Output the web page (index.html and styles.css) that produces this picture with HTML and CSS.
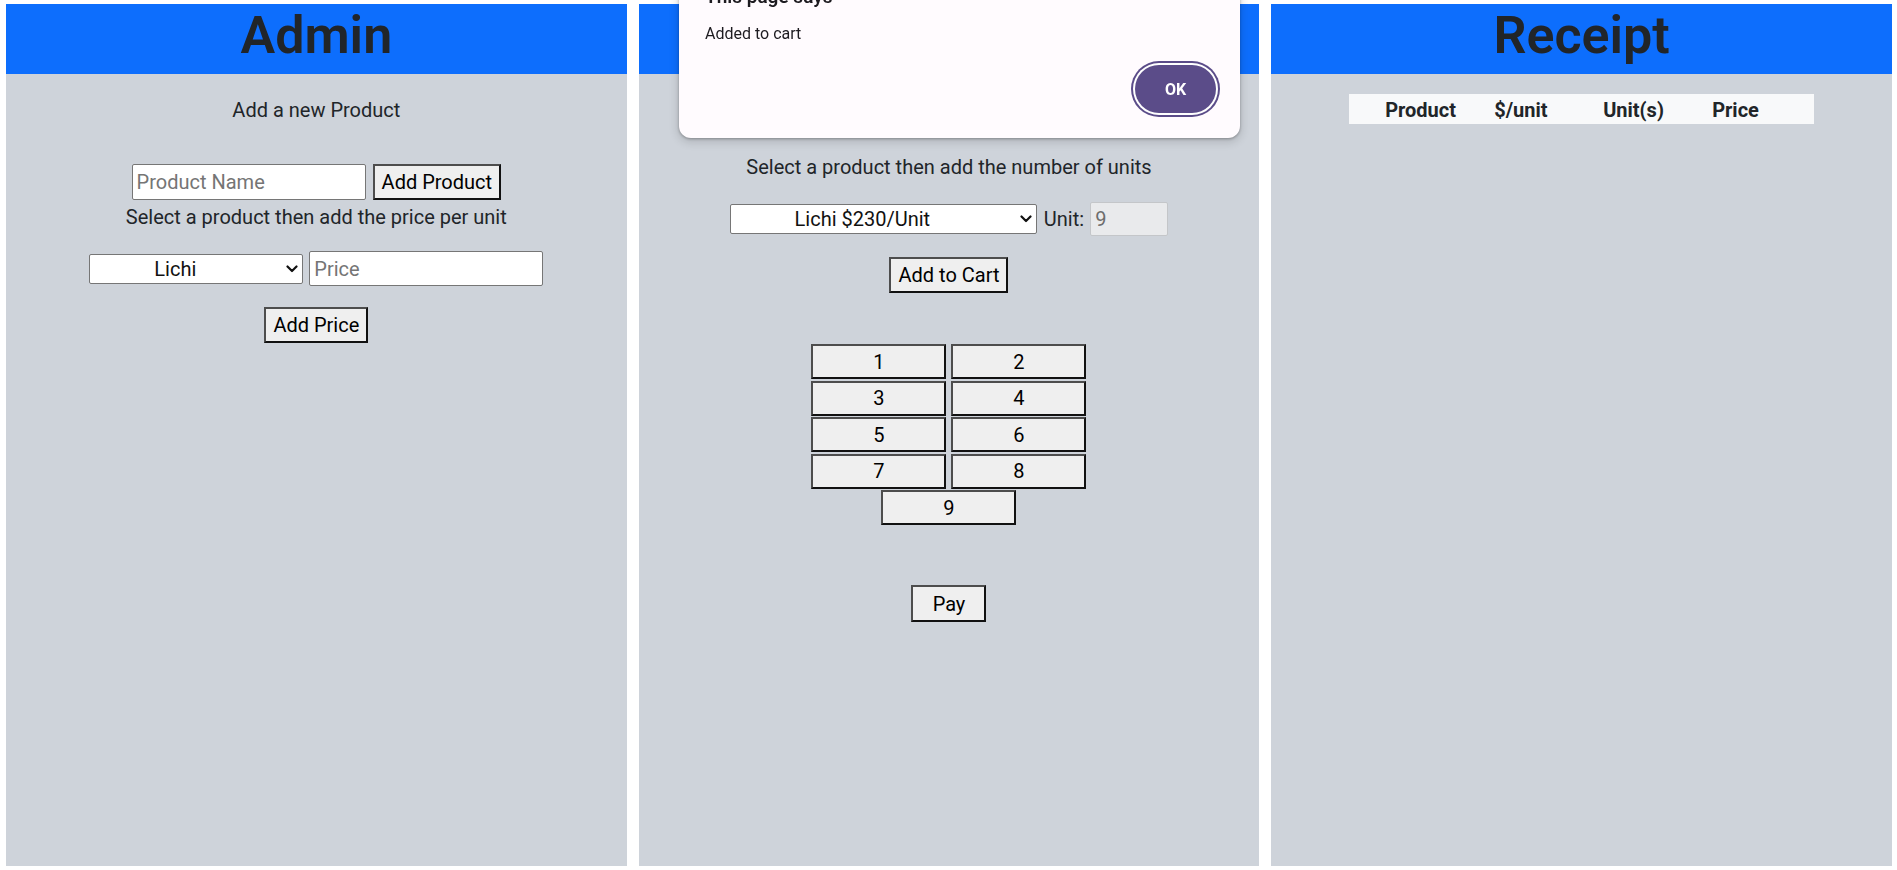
FILE: index.html
```html
<!DOCTYPE html>
<html lang="en">
<head>
<meta charset="utf-8">
<title>Shop POS</title>
<link rel="stylesheet" href="styles.css">
</head>
<body>
<main class="board">
  <section class="panel">
    <header class="panel-head"><h1 class="panel-title">Admin</h1></header>
    <div class="panel-body">
      <p class="text text-first">Add a new Product</p>
      <div class="field-row field-row-product">
        <input class="field field-name" type="text" placeholder="Product Name">
        <button class="btn" type="button">Add Product</button>
      </div>
      <p class="text text-tight">Select a product then add the price per unit</p>
      <div class="field-row field-row-price">
        <span class="picker-wrap">
          <select class="picker picker-admin"><option>Lichi</option></select>
          <svg class="chevron" width="12" height="8" viewBox="0 0 12 8" aria-hidden="true"><path d="M1.5 1.5 L6 6 L10.5 1.5" fill="none" stroke="#111" stroke-width="2.2" stroke-linecap="round" stroke-linejoin="round"/></svg>
        </span>
        <input class="field field-price" type="text" placeholder="Price">
      </div>
      <button class="btn btn-gap" type="button">Add Price</button>
    </div>
  </section>

  <section class="panel">
    <header class="panel-head"><h1 class="panel-title">Cashier</h1></header>
    <div class="panel-body">
      <p class="text text-cashier">Select a product then add the number of units</p>
      <div class="field-row field-row-unit">
        <span class="picker-wrap">
          <select class="picker picker-cashier"><option>Lichi $230/Unit</option></select>
          <svg class="chevron" width="12" height="8" viewBox="0 0 12 8" aria-hidden="true"><path d="M1.5 1.5 L6 6 L10.5 1.5" fill="none" stroke="#111" stroke-width="2.2" stroke-linecap="round" stroke-linejoin="round"/></svg>
        </span>
        <label class="unit-label">Unit:</label>
        <input class="field field-unit" type="text" value="9" disabled>
      </div>
      <button class="btn btn-gap" type="button">Add to Cart</button>
      <div class="keypad">
        <button class="key" type="button">1</button>
        <button class="key" type="button">2</button>
        <button class="key" type="button">3</button>
        <button class="key" type="button">4</button>
        <button class="key" type="button">5</button>
        <button class="key" type="button">6</button>
        <button class="key" type="button">7</button>
        <button class="key" type="button">8</button>
        <button class="key" type="button">9</button>
      </div>
      <button class="btn btn-pay" type="button">Pay</button>
    </div>
  </section>

  <section class="panel">
    <header class="panel-head"><h1 class="panel-title">Receipt</h1></header>
    <div class="panel-body">
      <table class="receipt">
        <thead>
          <tr><th>Product</th><th>$/unit</th><th>Unit(s)</th><th>Price</th></tr>
        </thead>
      </table>
    </div>
  </section>
</main>

<div class="alert" role="alertdialog">
  <h2 class="alert-title">This page says</h2>
  <p class="alert-msg">Added to cart</p>
  <div class="alert-actions"><button class="alert-ok" type="button">OK</button></div>
</div>
</body>
</html>
```

FILE: styles.css
```css
* { box-sizing: border-box; }

html, body {
  margin: 0;
  padding: 0;
  background: #ffffff;
}

body {
  font-family: Roboto, "Liberation Sans", sans-serif;
  font-size: 20px;
  color: #212529;
  overflow: hidden;
}

.board {
  display: grid;
  grid-template-columns: repeat(3, 1fr);
  column-gap: 12px;
  height: 100vh;
  padding: 4px 5px 4px 6px;
}

.panel {
  background: #ced3da;
  display: flex;
  flex-direction: column;
}

.panel-head {
  background: #0d6efd;
  height: 70px;
}

.panel-title {
  margin: 0;
  padding-bottom: 6px;
  font-size: 52px;
  line-height: 64px;
  font-weight: 600;
  text-align: center;
  color: #212529;
}

.panel-body {
  display: flex;
  flex-direction: column;
  align-items: center;
}

.text {
  margin: 0;
  line-height: 30px;
}

.text-first { margin-top: 21px; }
.text-tight { margin-top: 2px; }
.text-cashier { margin-top: 78px; }

.field-row {
  display: flex;
  align-items: center;
}

.field-row-product { margin-top: 39px; gap: 7px; }
.field-row-price { margin-top: 19px; gap: 6px; }
.field-row-unit { margin-top: 20px; }

.field {
  font-family: inherit;
  font-size: 20px;
  color: #212529;
  background: #ffffff;
  border: 1px solid #767676;
  border-radius: 2px;
  padding: 0 4px;
  margin: 0;
}

.field::placeholder { color: #757575; }

.field-name { width: 234px; height: 36px; }
.field-price { width: 234px; height: 35px; }

.field-unit {
  width: 78px;
  height: 34px;
  margin-left: 6px;
  background: #e9eaec;
  border-color: #c4c6c9;
  color: #6d6d6d;
}

.picker-wrap {
  position: relative;
  display: flex;
}

.picker {
  -webkit-appearance: none;
  appearance: none;
  font-family: inherit;
  font-size: 20px;
  font-weight: 400;
  color: #111111;
  background: #ffffff;
  border: 1px solid #767676;
  border-radius: 2px;
  height: 30px;
  margin: 0;
  padding: 0 46px 0 4px;
  text-align: center;
  text-align-last: center;
}

.picker-admin { width: 214px; }
.picker-cashier { width: 307px; }

.chevron {
  position: absolute;
  right: 5px;
  top: 11px;
  pointer-events: none;
}

.unit-label {
  margin-left: 7px;
  line-height: 30px;
}

.btn, .key {
  font-family: inherit;
  font-size: 20px;
  color: #000000;
  background: #efefef;
  border-style: solid;
  border-width: 2px;
  border-color: #4d4d4d #111111 #111111 #4d4d4d;
  border-radius: 0;
  margin: 0;
  padding: 0 7px;
  height: 36px;
}

.btn-gap { margin-top: 21px; }

.btn-pay {
  margin-top: 60px;
  height: 37px;
  width: 75px;
  padding: 0;
}

.keypad {
  margin-top: 51px;
  width: 275px;
  display: flex;
  flex-wrap: wrap;
  justify-content: center;
  column-gap: 5px;
  row-gap: 1.5px;
}

.key {
  width: 135px;
  height: 35px;
  padding: 0;
}

.receipt {
  margin-top: 20px;
  width: 465px;
  background: #f8f9fa;
  border-collapse: collapse;
  table-layout: fixed;
}

.receipt th {
  text-align: left;
  font-weight: 700;
  font-size: 20px;
  line-height: 28px;
  padding: 2px 0 0 0;
  width: 109px;
}

.receipt th:first-child {
  padding-left: 36px;
  width: 145px;
}

.receipt th:last-child { width: auto; }

.alert {
  position: fixed;
  top: -39px;
  left: 679px;
  width: 561px;
  padding: 24px 24px 25px 26px;
  background: #fffbfe;
  border-radius: 12px;
  box-shadow: 0 1px 3px rgba(0, 0, 0, 0.3), 0 3px 8px 2px rgba(0, 0, 0, 0.12);
  display: flex;
  flex-direction: column;
}

.alert-title {
  margin: 0;
  font-size: 19px;
  line-height: 24px;
  font-weight: 600;
  color: #1d1b20;
}

.alert-msg {
  margin: 15px 0 0 0;
  font-size: 16px;
  line-height: 20px;
  color: #1d1b20;
}

.alert-actions {
  display: flex;
  justify-content: flex-end;
  margin-top: 21px;
}

.alert-ok {
  width: 81px;
  height: 48px;
  border: none;
  border-radius: 24px;
  background: #5b4c89;
  color: #ffffff;
  font-family: inherit;
  font-size: 16px;
  font-weight: 700;
  box-shadow: 0 0 0 2px #ffffff, 0 0 0 4px #5b4c89;
}
```
